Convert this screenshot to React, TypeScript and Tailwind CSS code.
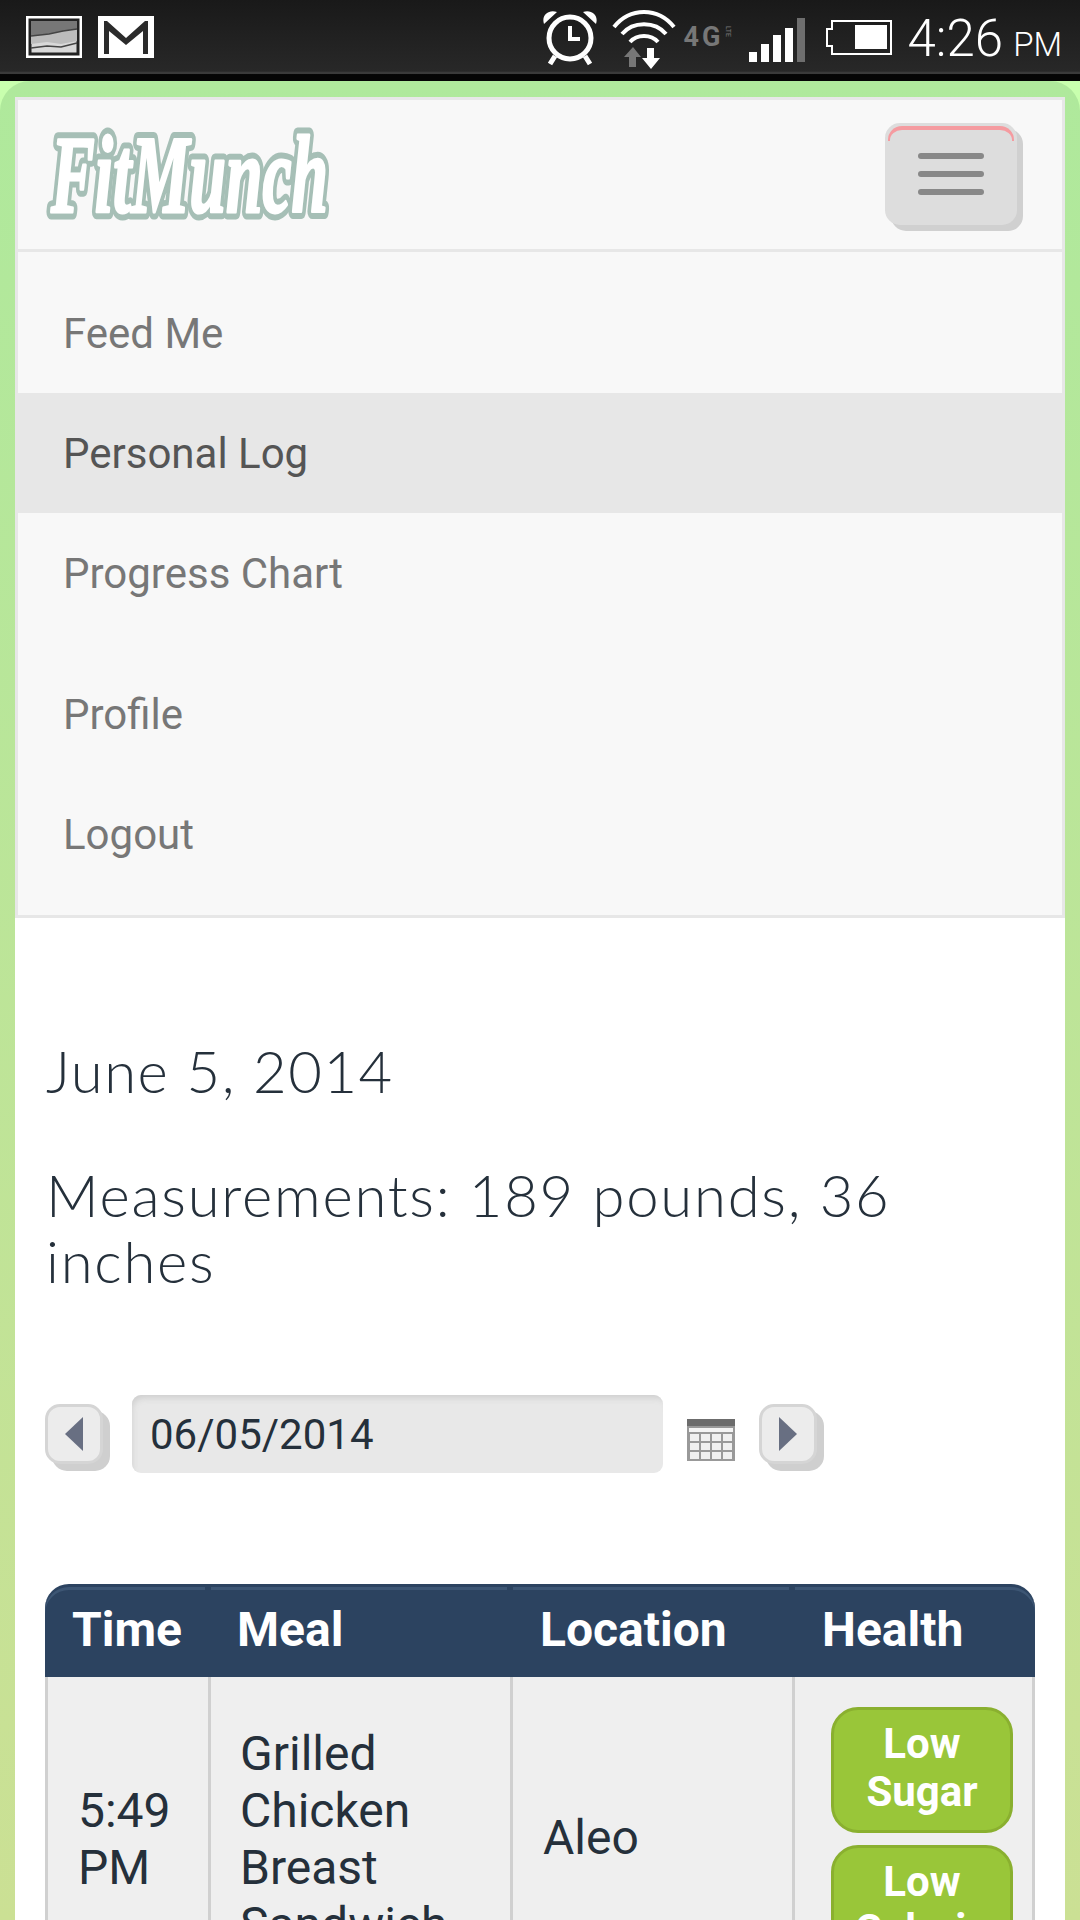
import type { ReactNode } from "react";

const roboto = "font-['Roboto',sans-serif]";

function NavItem({ children, active }: { children: ReactNode; active?: boolean }) {
  return (
    <li
      className={`h-[120px] pl-[45px] flex items-center text-[42px] ${
        active ? "bg-[#e7e7e7] text-[#555555]" : "text-[#777777]"
      }`}
    >
      {children}
    </li>
  );
}

function StatusBar() {
  return (
    <div className="h-[81px] bg-[linear-gradient(#191919,#282828_88%,#3a3a3a_89%,#3a3a3a_91%,#050505_92%)] flex justify-between">
      <div className="flex items-start pl-[26px] pt-[16px] gap-[16px]">
        <svg width="56" height="44" viewBox="0 0 56 44">
          <rect width="56" height="42" fill="#fff" />
          <rect x="4" y="4" width="48" height="34" fill="#d8d8d8" stroke="#222" strokeWidth="3" />
          <path d="M5 5h46v8l-14 2-14 3-18 2z" fill="#777" />
          <path d="M5 20l18-2 14-3 14-2v12l-16 3-14-2-16 2z" fill="#bcbcbc" />
          <path d="M5 20l18-2 14-3 14-2M5 32l16-2 14 1 16-4" stroke="#444" strokeWidth="1.5" fill="none" />
        </svg>
        <svg width="56" height="42" viewBox="0 0 56 42">
          <rect width="56" height="42" fill="#fff" />
          <path d="M6 38V5h3l19 17L47 5h3v33h-5V15L28 29 11 15v23z" fill="#2b2b2b" />
        </svg>
      </div>
      <div className="flex items-start pr-[18px]">
        {/* alarm */}
        <svg width="54" height="72" viewBox="543 0 54 72">
          <circle cx="570" cy="38" r="21" fill="none" stroke="#fff" strokeWidth="5" />
          <path d="M570 26v13h10" fill="none" stroke="#fff" strokeWidth="4" />
          <path d="M544 24c-3-9 5-15 13-12zM596 24c3-9-5-15-13-12z" fill="#fff" />
          <path d="M555 56l-5 8M585 56l5 8" stroke="#fff" strokeWidth="5" />
        </svg>
        {/* wifi + data arrows */}
        <svg className="ml-[15px]" width="64" height="72" viewBox="612 0 64 72">
          <g fill="none" stroke="#fff" strokeWidth="4">
            <path d="M614 27c16-20 44-20 60 0" />
            <path d="M622 34c11-13 33-13 44 0" />
            <path d="M630 42c7-8 21-8 28 0" />
          </g>
          <path d="M633 47l8 10h-5v10h-7V57h-5z" fill="#777" />
          <path d="M647 48h7v10h6l-9 11-9-11h5z" fill="#fff" />
        </svg>
        {/* 4G LTE */}
        <div className="ml-[8px] w-[49px] h-[72px] flex items-start pt-[26px] gap-[1px]">
          <span className="text-[27px] leading-[22px] font-bold tracking-[3px] text-[#777777] font-['Roboto',sans-serif]">
            4G
          </span>
          <span className="text-[7px] leading-[7px] text-[#777777] font-['Roboto',sans-serif] [writing-mode:vertical-rl]">
            LTE
          </span>
        </div>
        {/* signal */}
        <svg className="ml-[16px]" width="56" height="72" viewBox="749 0 56 72">
          <rect x="749" y="52" width="8" height="10" fill="#fff" />
          <rect x="761" y="44" width="8" height="18" fill="#fff" />
          <rect x="773" y="35" width="8" height="27" fill="#fff" />
          <rect x="785" y="28" width="8" height="34" fill="#fff" />
          <rect x="797" y="18" width="8" height="44" fill="#6e6e6e" />
        </svg>
        {/* battery */}
        <svg className="ml-[20px]" width="68" height="72" viewBox="825 0 68 72">
          <path d="M832 21h59v33h-59v-8h-5V29h5z" fill="none" stroke="#fff" strokeWidth="2" />
          <rect x="855" y="25" width="32" height="24" fill="#fff" />
        </svg>
        <div className={`ml-[15px] h-[72px] flex items-baseline pt-[11px] text-white font-light ${roboto}`}>
          <span className="text-[51px] leading-[56px]">4:26</span>
          <span className="ml-[10px] text-[33px] leading-[56px]">PM</span>
        </div>
      </div>
    </div>
  );
}

function Logo() {
  const text = { x: 7, y: 92, fontSize: 110, textLength: 277, lengthAdjust: "spacingAndGlyphs" as const };
  return (
    <svg className="mt-[20px] shrink-0" width="440" height="116" viewBox="0 0 440 116">
      <g fontFamily="'Liberation Serif', serif" fontStyle="italic" fontWeight="700" strokeLinejoin="round" strokeLinecap="round">
        <text {...text} fill="#a6bfb6" stroke="#a6bfb6" strokeWidth="15">
          FitMunch
        </text>
        <text {...text} fill="#ffffff" stroke="#ffffff" strokeWidth="3">
          FitMunch
        </text>
      </g>
    </svg>
  );
}

function Nav() {
  return (
    <nav className={`border-[3px] border-[#e7e7e7] bg-[#f8f8f8] ${roboto}`}>
      <div className="h-[152px] border-b-[3px] border-[#e7e7e7] flex justify-between pl-[26px] pr-[45px]">
        <Logo />
        <button className="mt-[23px] w-[132px] h-[102px] rounded-[15px] bg-[#dddddd] shadow-[6px_6px_0_#d0d0d0] border-t-[3px] border-[#dddddd] flex flex-col items-center px-[3px]">
          <span className="w-full h-[15px] shrink-0 border-t-[4px] border-x-[2px] border-[#f59ba0] rounded-t-[14px]" />
          <span className="mt-[12px] w-[66px] h-[6px] rounded-full bg-[#888888]" />
          <span className="mt-[12px] w-[66px] h-[6px] rounded-full bg-[#888888]" />
          <span className="mt-[12px] w-[66px] h-[6px] rounded-full bg-[#888888]" />
        </button>
      </div>
      <ul className="pt-[21px]">
        <NavItem>Feed Me</NavItem>
        <NavItem active>Personal Log</NavItem>
        <NavItem>Progress Chart</NavItem>
      </ul>
      <ul className="pt-[21px] pb-[21px]">
        <NavItem>Profile</NavItem>
        <NavItem>Logout</NavItem>
      </ul>
    </nav>
  );
}

function StepButton({ dir }: { dir: "prev" | "next" }) {
  return (
    <button className="w-[58px] h-[60px] shrink-0 rounded-[15px] bg-[#ececec] border-[3px] border-[#d5d5d5] shadow-[7px_7px_0_#cfcfcf] flex items-center justify-center">
      <svg width="18" height="34" viewBox="0 0 18 34">
        <path d={dir === "prev" ? "M18 0v34L0 17z" : "M0 0v34l18-17z"} fill="#686f82" />
      </svg>
    </button>
  );
}

function DateRow() {
  return (
    <div className={`mt-[101px] h-[78px] flex items-center ${roboto}`}>
      <StepButton dir="prev" />
      <div className="ml-[29px] w-[531px] h-[78px] rounded-[9px] bg-[#e8e8e8] shadow-[inset_3px_6px_6px_-3px_#cfcfcf] pl-[18px] flex items-center text-[42px] text-[#25303b]">
        06/05/2014
      </div>
      <svg className="ml-[24px] mt-[12px]" width="48" height="42" viewBox="0 0 48 42">
        <rect width="48" height="42" fill="#999999" />
        <rect width="48" height="7" fill="#6c6c6c" />
        <rect x="2" y="9" width="44" height="4" fill="#f4f4f4" />
        <g fill="#f0f0f0">
          {[15, 24, 33].map((y) =>
            [3, 14, 25, 36].map((x) => <rect key={`${x}-${y}`} x={x} y={y} width="9" height="7" />)
          )}
        </g>
      </svg>
      <div className="ml-[24px]">
        <StepButton dir="next" />
      </div>
    </div>
  );
}

function Badge({ top, bottom }: { top: string; bottom: string }) {
  return (
    <div className="w-[182px] h-[126px] shrink-0 rounded-[27px] bg-[#99c639] border-[3px] border-[#8ab02f] pb-[4px] flex flex-col items-center justify-center text-[42px] leading-[48px] font-bold text-white">
      <span>{top}</span>
      <span>{bottom}</span>
    </div>
  );
}

function LogTable() {
  const cols = "grid grid-cols-[166px_302px_282px_240px]";
  const head = "pl-[27px] pt-[13px] leading-[60px] shadow-[inset_0_3px_0_#3d5674]";
  return (
    <div className={`mt-[111px] w-[990px] ${roboto}`}>
      <div className={`${cols} h-[93px] rounded-t-[24px] bg-[#2c4360] border-t-[3px] border-[#2c4360] text-[48px] font-bold text-white`}>
        <div className={`${head} rounded-tl-[24px] border-r-[6px] border-[#2c4360]`}>Time</div>
        <div className={`${head} !pl-[26px] border-r-[6px] border-[#2c4360]`}>Meal</div>
        <div className={`${head} border-r-[6px] border-[#2c4360]`}>Location</div>
        <div className={`${head} rounded-tr-[24px]`}>Health</div>
      </div>
      <div className={`${cols} bg-[#efefef] text-[48px] leading-[57px] text-[#25303b]`}>
        <div className="border-x-[3px] border-[#d0d0d0] pl-[30px] pr-[20px] flex items-center">5:49 PM</div>
        <div className="border-r-[3px] border-[#d0d0d0] pl-[29px] pr-[30px] flex items-center">
          Grilled Chicken Breast Sandwich
        </div>
        <div className="border-r-[3px] border-[#d0d0d0] pl-[30px] pb-[4px] flex items-center">Aleo</div>
        <div className="border-r-[3px] border-[#d0d0d0] pl-[36px] py-[30px] flex flex-col gap-[12px]">
          <Badge top="Low" bottom="Sugar" />
          <Badge top="Low" bottom="Calorie" />
        </div>
      </div>
    </div>
  );
}

export default function App() {
  return (
    <div className="w-[1080px] h-[1920px] overflow-hidden bg-[#c8ffae]">
      <StatusBar />
      <main className="h-[1839px] rounded-t-[30px] bg-[linear-gradient(#afe99c,#cbe094)] px-[15px] pt-[16px]">
        <div className="h-full bg-white">
          <Nav />
          <section className="px-[30px]">
            <h1 className="mt-[120px] ml-[1px] text-[58px] leading-[66px] font-light tracking-[1.5px] text-[#25303b] font-['Lato',sans-serif]">
              June 5, 2014
            </h1>
            <h2 className="mt-[58px] ml-[1px] w-[900px] text-[58px] leading-[66px] font-light tracking-[1.75px] text-[#25303b] font-['Lato',sans-serif]">
              Measurements: 189 pounds, 36 inches
            </h2>
            <DateRow />
            <LogTable />
          </section>
        </div>
      </main>
    </div>
  );
}
